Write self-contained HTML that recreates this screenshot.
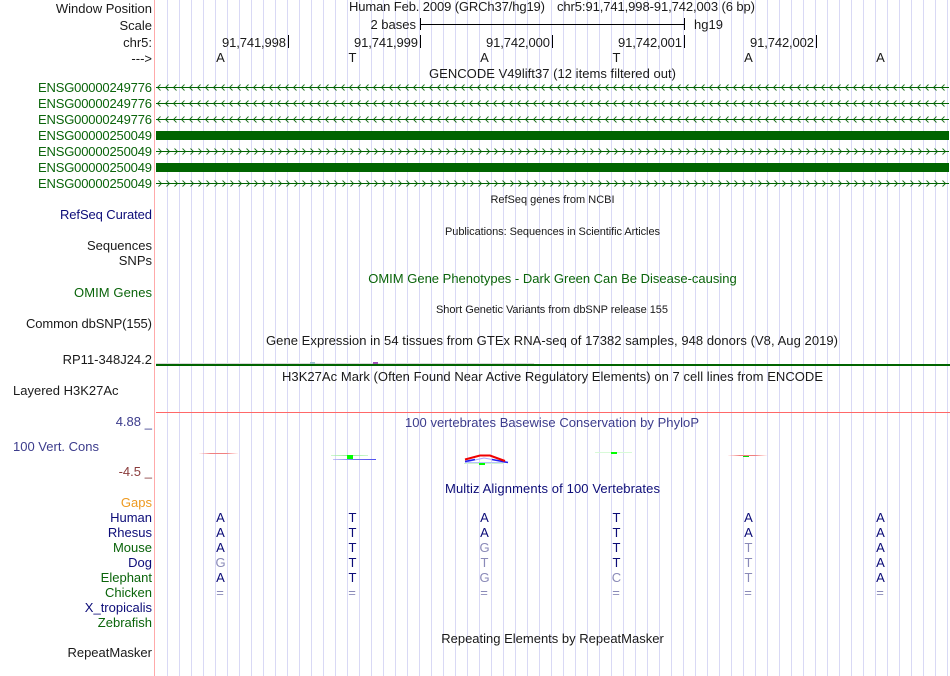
<!DOCTYPE html>
<html>
<head>
<meta charset="utf-8">
<title>Genome Browser</title>
<style>
html,body{margin:0;padding:0;background:#fff;width:950px;height:676px;overflow:hidden}
svg{display:block}
text{font-family:"Liberation Sans",Arial,sans-serif;font-size:13px;fill:#1a1a1a}
.l{text-anchor:end}
.c{text-anchor:middle}
.s{font-size:11px}
.g{fill:#0a640a}
.n{fill:#0c0c78}
.v{fill:#3c3c8c}
.b{fill:#0c0c78;text-anchor:middle}
.f{fill:#8a8ab8;text-anchor:middle}
</style>
</head>
<body>
<svg width="950" height="676" viewBox="0 0 950 676" xmlns="http://www.w3.org/2000/svg">
<defs>
<pattern id="grid" x="167" y="0" width="12" height="10" patternUnits="userSpaceOnUse"><rect x="0" y="0" width="1" height="10" fill="#d9d9f5"/></pattern>
<pattern id="cl" x="157" y="0" width="8" height="7" patternUnits="userSpaceOnUse"><path d="M3.5 0.5 L0.5 3.5 L3.5 6.5" fill="none" stroke="#1c6e1c" stroke-width="0.9"/></pattern>
<pattern id="cr" x="158" y="0" width="8" height="7" patternUnits="userSpaceOnUse"><path d="M0.5 0.5 L3.5 3.5 L0.5 6.5" fill="none" stroke="#1c6e1c" stroke-width="0.9"/></pattern>
<linearGradient id="fr" x1="0" x2="1" y1="0" y2="0"><stop offset="0" stop-color="#ff9090" stop-opacity="0.1"/><stop offset=".3" stop-color="#f08080"/><stop offset=".7" stop-color="#f08080"/><stop offset="1" stop-color="#ff9090" stop-opacity="0.1"/></linearGradient>
<linearGradient id="fg" x1="0" x2="1" y1="0" y2="0"><stop offset="0" stop-color="#a0f0a0" stop-opacity="0.5"/><stop offset=".5" stop-color="#90f090"/><stop offset="1" stop-color="#a0f0a0" stop-opacity="0.5"/></linearGradient>
<linearGradient id="fb" x1="0" x2="1" y1="0" y2="0"><stop offset="0" stop-color="#a0a0f0" stop-opacity="0.6"/><stop offset=".5" stop-color="#7070f0"/><stop offset="1" stop-color="#5050f0"/></linearGradient>
</defs>

<rect width="950" height="676" fill="#fff"/>
<rect x="156" y="0" width="794" height="676" fill="url(#grid)"/>
<rect x="154" y="0" width="1" height="676" fill="#ffaaaa"/>

<!-- Header -->
<text class="l" x="152" y="13">Window Position</text>
<text class="l" x="152" y="30">Scale</text>
<text class="l" x="152" y="47">chr5:</text>
<text class="l" x="152" y="63">---&gt;</text>
<text x="349" y="11" textLength="196">Human Feb. 2009 (GRCh37/hg19)</text>
<text x="557" y="11" textLength="198">chr5:91,741,998-91,742,003 (6 bp)</text>
<text class="l" x="416" y="29">2 bases</text>
<rect x="420" y="18" width="1" height="12" fill="#000"/>
<rect x="684" y="18" width="1" height="12" fill="#000"/>
<rect x="420" y="24" width="265" height="1" fill="#000"/>
<text x="694" y="29">hg19</text>

<text x="222" y="47" textLength="64">91,741,998</text><rect x="288" y="35" width="1" height="13" fill="#000"/>
<text x="354" y="47" textLength="64">91,741,999</text><rect x="420" y="35" width="1" height="13" fill="#000"/>
<text x="486" y="47" textLength="64">91,742,000</text><rect x="552" y="35" width="1" height="13" fill="#000"/>
<text x="618" y="47" textLength="64">91,742,001</text><rect x="684" y="35" width="1" height="13" fill="#000"/>
<text x="750" y="47" textLength="64">91,742,002</text><rect x="816" y="35" width="1" height="13" fill="#000"/>

<text class="c" x="220.500" y="62">A</text>
<text class="c" x="352.500" y="62">T</text>
<text class="c" x="484.500" y="62">A</text>
<text class="c" x="616.500" y="62">T</text>
<text class="c" x="748.500" y="62">A</text>
<text class="c" x="880.500" y="62">A</text>

<text x="429" y="78" textLength="247">GENCODE V49lift37 (12 items filtered out)</text>

<!-- Gene rows -->
<text class="g" x="38" y="92" textLength="114">ENSG00000249776</text>
<text class="g" x="38" y="108" textLength="114">ENSG00000249776</text>
<text class="g" x="38" y="124" textLength="114">ENSG00000249776</text>
<text class="g" x="38" y="140" textLength="114">ENSG00000250049</text>
<text class="g" x="38" y="156" textLength="114">ENSG00000250049</text>
<text class="g" x="38" y="172" textLength="114">ENSG00000250049</text>
<text class="g" x="38" y="188" textLength="114">ENSG00000250049</text>

<g transform="translate(0,84)"><rect x="156" width="793" height="7" fill="url(#cl)"/><rect x="156" y="3" width="793" height="1" fill="#006400"/></g>
<g transform="translate(0,100)"><rect x="156" width="793" height="7" fill="url(#cl)"/><rect x="156" y="3" width="793" height="1" fill="#006400"/></g>
<g transform="translate(0,116)"><rect x="156" width="793" height="7" fill="url(#cl)"/><rect x="156" y="3" width="793" height="1" fill="#006400"/></g>
<rect x="156" y="131" width="793" height="9" fill="#006400"/>
<g transform="translate(0,148)"><rect x="156" width="793" height="7" fill="url(#cr)"/><rect x="156" y="3" width="793" height="1" fill="#006400"/></g>
<rect x="156" y="163" width="793" height="9" fill="#006400"/>
<g transform="translate(0,180)"><rect x="156" width="793" height="7" fill="url(#cr)"/><rect x="156" y="3" width="793" height="1" fill="#006400"/></g>

<!-- Tracks -->
<text class="c s" x="552.500" y="203">RefSeq genes from NCBI</text>
<text class="n" x="60" y="219" textLength="92">RefSeq Curated</text>
<text class="s" x="445" y="235" textLength="215">Publications: Sequences in Scientific Articles</text>
<text class="l" x="152" y="250">Sequences</text>
<text class="l" x="152" y="265">SNPs</text>
<text class="c g" x="552.500" y="283">OMIM Gene Phenotypes - Dark Green Can Be Disease-causing</text>
<text class="g" x="74" y="297" textLength="78">OMIM Genes</text>
<text class="s" x="436" y="313" textLength="232">Short Genetic Variants from dbSNP release 155</text>
<text x="26" y="328" textLength="126">Common dbSNP(155)</text>
<text x="266" y="345" textLength="572">Gene Expression in 54 tissues from GTEx RNA-seq of 17382 samples, 948 donors (V8, Aug 2019)</text>
<text class="l" x="152" y="364">RP11-348J24.2</text>

<rect x="156" y="363" width="378" height="1" fill="#d8d8d8"/>
<rect x="310" y="362" width="5" height="2" fill="#a0c0d0"/>
<rect x="373" y="362" width="5" height="2" fill="#a050b8"/>
<rect x="156" y="364" width="794" height="2" fill="#006400"/>

<text x="282" y="381" textLength="541">H3K27Ac Mark (Often Found Near Active Regulatory Elements) on 7 cell lines from ENCODE</text>
<text x="13" y="395">Layered H3K27Ac</text>
<rect x="156" y="412" width="794" height="1" fill="#ff6868"/>

<text class="l v" x="141" y="426">4.88</text>
<text class="l v" x="152" y="427">_</text>
<text class="v" x="405" y="427" textLength="294">100 vertebrates Basewise Conservation by PhyloP</text>
<text class="v" x="13" y="451">100 Vert. Cons</text>
<text class="l" x="141" y="476" style="fill:#8a3c3c">-4.5</text>
<text class="l" x="152" y="476" style="fill:#8a3c3c">_</text>

<!-- Conservation marks -->
<rect x="199" y="453" width="39" height="1" fill="url(#fr)"/>

<rect x="331" y="455" width="37" height="1" fill="url(#fg)"/>
<rect x="347" y="455" width="6" height="4" fill="#00ff00"/>
<rect x="333" y="459" width="43" height="1" fill="url(#fb)"/>

<rect x="465" y="462" width="43" height="1" fill="#b8c0ff"/>
<rect x="464" y="463" width="40" height="1" fill="#d0f5d0"/>
<path d="M466 462 L484 458 L506 462" fill="none" stroke="#a8a8ff" stroke-width="1"/>
<path d="M465 461.500 L475 459.500 M492 459.500 L508 462.500" stroke="#2020f0" stroke-width="1.500" fill="none"/>
<path d="M465 459.500 L480 455.500 L490 455.500 L505 461" fill="none" stroke="#f00000" stroke-width="2"/>
<rect x="479" y="463" width="6" height="2" fill="#00ff00"/>

<rect x="595" y="452" width="37" height="1" fill="#d8fad8"/>
<rect x="611" y="452" width="6" height="2" fill="#00ff00"/>

<rect x="728" y="455" width="39" height="1" fill="url(#fr)"/>
<rect x="743" y="456" width="6" height="1" fill="#00e000"/>

<!-- Multiz -->
<text class="n" x="445" y="493" textLength="215">Multiz Alignments of 100 Vertebrates</text>
<text class="l" x="152" y="507" style="fill:#ee9a20">Gaps</text>
<text class="l n" x="152" y="522">Human</text>
<text class="l n" x="152" y="537">Rhesus</text>
<text class="l g" x="152" y="552">Mouse</text>
<text class="l n" x="152" y="567">Dog</text>
<text class="l g" x="152" y="582">Elephant</text>
<text class="l g" x="152" y="597">Chicken</text>
<text class="l n" x="152" y="612">X_tropicalis</text>
<text class="l g" x="152" y="627">Zebrafish</text>

<text class="b" x="220.500" y="522">A</text><text class="b" x="352.500" y="522">T</text><text class="b" x="484.500" y="522">A</text><text class="b" x="616.500" y="522">T</text><text class="b" x="748.500" y="522">A</text><text class="b" x="880.500" y="522">A</text>
<text class="b" x="220.500" y="537">A</text><text class="b" x="352.500" y="537">T</text><text class="b" x="484.500" y="537">A</text><text class="b" x="616.500" y="537">T</text><text class="b" x="748.500" y="537">A</text><text class="b" x="880.500" y="537">A</text>
<text class="b" x="220.500" y="552">A</text><text class="b" x="352.500" y="552">T</text><text class="f" x="484.500" y="552">G</text><text class="b" x="616.500" y="552">T</text><text class="f" x="748.500" y="552">T</text><text class="b" x="880.500" y="552">A</text>
<text class="f" x="220.500" y="567">G</text><text class="b" x="352.500" y="567">T</text><text class="f" x="484.500" y="567">T</text><text class="b" x="616.500" y="567">T</text><text class="f" x="748.500" y="567">T</text><text class="b" x="880.500" y="567">A</text>
<text class="b" x="220.500" y="582">A</text><text class="b" x="352.500" y="582">T</text><text class="f" x="484.500" y="582">G</text><text class="f" x="616.500" y="582">C</text><text class="f" x="748.500" y="582">T</text><text class="b" x="880.500" y="582">A</text>
<text class="f" x="220" y="597">=</text><text class="f" x="352" y="597">=</text><text class="f" x="484" y="597">=</text><text class="f" x="616" y="597">=</text><text class="f" x="748" y="597">=</text><text class="f" x="880" y="597">=</text>

<text class="c" x="552.500" y="643">Repeating Elements by RepeatMasker</text>
<text class="l" x="152" y="657">RepeatMasker</text>
</svg>
</body>
</html>
